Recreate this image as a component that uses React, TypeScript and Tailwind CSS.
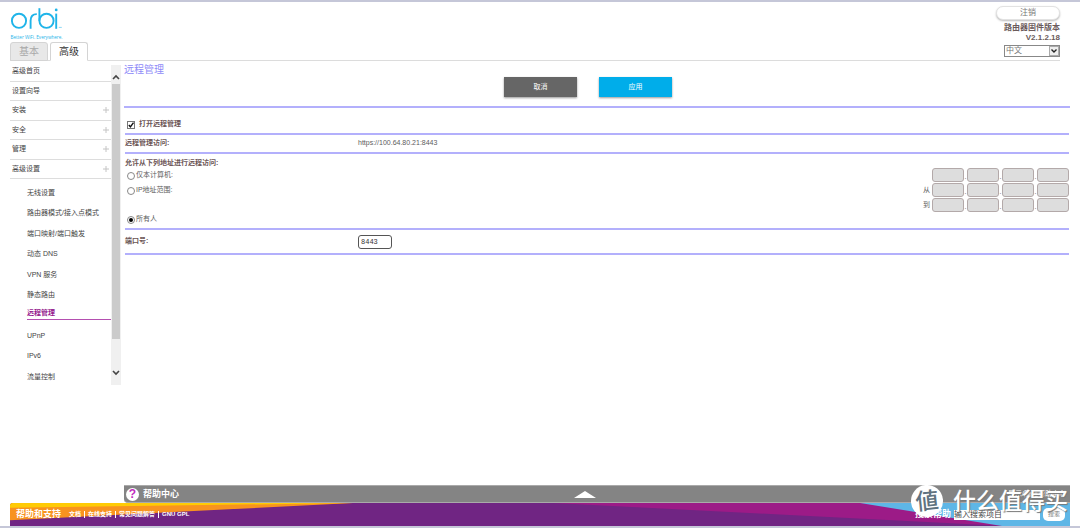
import { useState } from "react";
import type { ReactNode } from "react";

const sections = [
  { label: "高级首页", expandable: false },
  { label: "设置向导", expandable: false },
  { label: "安装", expandable: true },
  { label: "安全", expandable: true },
  { label: "管理", expandable: true },
  { label: "高级设置", expandable: true },
];

const subItems = [
  "无线设置",
  "路由器模式/接入点模式",
  "端口映射/端口触发",
  "动态 DNS",
  "VPN 服务",
  "静态路由",
  "远程管理",
  "UPnP",
  "IPv6",
  "流量控制",
];

const supportLinks = ["文档", "在线支持", "常见问题解答", "GNU GPL"];

function Logo() {
  return (
    <svg className="h-[34px] w-[58px]" viewBox="0 0 58 34" role="img" aria-label="orbi">
      <g fill="none" stroke="#1fb4e9" strokeWidth="1.9">
        <circle cx="9" cy="12.8" r="7.1" />
        <path d="M20.6 20.8V12.6C20.6 8.4 22.8 6 26.8 6.1" />
        <path d="M29.4 0.2V12.8" />
        <circle cx="36.5" cy="12.8" r="7.1" />
        <path d="M46.2 5.6V20.8" />
      </g>
      <circle cx="46.2" cy="1.9" r="1.4" fill="#1fb4e9" />
      <path d="M48.8 19.4h3" stroke="#8ed8f4" strokeWidth="1" />
      <text x="0.5" y="30.5" fontSize="4.6" fill="#1fb4e9" fontFamily="Open Sans, sans-serif">
        Better WiFi. Everywhere.
      </text>
    </svg>
  );
}

function Header() {
  return (
    <header className="mr-5 ml-2.5 flex h-[59px] items-end justify-between border-b border-[#dcdcdc]">
      <div className="flex flex-col">
        <Logo />
        <nav className="-mb-px flex gap-0.5">
          <button className="h-[19px] w-[38px] rounded-t-[3px] border border-[#d4d4d4] bg-[#e8e8e8] text-[10px] leading-4 text-[#a8a8a8]">
            基本
          </button>
          <button className="h-[19px] w-[38px] rounded-t-[3px] border border-[#d4d4d4] border-b-white bg-white text-[10px] leading-4 text-[#333]">
            高级
          </button>
        </nav>
      </div>
      <div className="flex flex-col items-end pb-[3px] text-[8px] leading-[10px] text-[#6b5b5b]">
        <button className="mb-[3px] h-[14px] w-[64px] rounded-full border border-[#e2e2e2] bg-white leading-3 text-[#777] shadow-[0_1px_2px_#bbb]">
          注销
        </button>
        <strong>路由器固件版本</strong>
        <strong>V2.1.2.18</strong>
        <span className="relative mt-0.5 block">
          <select
            aria-label="语言"
            className="block h-3 w-[56px] appearance-none border border-[#888] bg-white pl-px text-[8px] leading-[10px] text-[#777]"
          >
            <option>中文</option>
          </select>
          <span className="pointer-events-none absolute top-px right-px flex h-2.5 w-2.5 items-center justify-center border border-[#aaa] bg-[#eee]">
            <svg className="h-1.5 w-1.5" viewBox="0 0 6 6">
              <path d="M0.5 1.5L3 4L5.5 1.5" fill="none" stroke="#222" strokeWidth="1.4" />
            </svg>
          </span>
        </span>
      </div>
    </header>
  );
}

function Sidebar() {
  return (
    <aside className="flex h-[323px] shrink-0 text-[7px] text-[#444]">
      <nav className="w-[101px] overflow-hidden">
        <ul className="grid h-[117px] grid-rows-6">
          {sections.map((s) => (
            <li key={s.label} className="border-b border-[#ddd]">
              <a href="#" className="flex h-full items-center justify-between pr-0.5 pl-0.5">
                {s.label}
                {s.expandable && (
                  <svg className="h-1.5 w-1.5" viewBox="0 0 6 6">
                    <path d="M3 0V6M0 3H6" stroke="#c4c4c4" strokeWidth="1" />
                  </svg>
                )}
              </a>
            </li>
          ))}
        </ul>
        <ul className="mt-1 ml-[17px] grid h-[204px] grid-rows-10">
          {subItems.map((label) => (
            <li key={label} className="flex items-center whitespace-nowrap">
              {label === "远程管理" ? (
                <a
                  href="#"
                  aria-current="page"
                  className="mb-1 w-full border-b border-[#b44fb0] leading-3 font-bold text-[#951b8e]"
                >
                  {label}
                </a>
              ) : (
                <a href="#">{label}</a>
              )}
            </li>
          ))}
        </ul>
      </nav>
      <div className="mt-[3px] flex w-2.5 flex-col items-center bg-[#f0f0f0]">
        <svg className="h-[19px] w-2.5" viewBox="0 0 10 19">
          <path d="M2 14L5 11L8 14" fill="none" stroke="#444" strokeWidth="1.6" />
        </svg>
        <div className="h-[255px] w-2 bg-[#cbcbcb]" />
        <svg className="mt-auto h-6 w-2.5" viewBox="0 0 10 24">
          <path d="M2 10L5 13L8 10" fill="none" stroke="#444" strokeWidth="1.6" />
        </svg>
      </div>
    </aside>
  );
}

function AddressRow({ label, name }: { label?: string; name: string }) {
  return (
    <div className="flex h-[14px] items-center justify-end">
      {label && <span className="mr-0.5">{label}</span>}
      {[1, 2, 3, 4].map((n) => (
        <span key={n} className="flex items-end">
          <input
            disabled
            aria-label={`${name} ${n}`}
            className="h-[14px] w-8 rounded-[3px] border border-[#b3a9a9] bg-[#ddd]"
          />
          {n < 4 && <span className="w-[3px] text-center leading-[10px]">.</span>}
        </span>
      ))}
    </div>
  );
}

function RadioRow({
  label,
  checked,
  onSelect,
}: {
  label: string;
  checked: boolean;
  onSelect: () => void;
}) {
  return (
    <label className="flex h-[15px] items-center gap-px pl-0.5">
      <input
        type="radio"
        name="access"
        checked={checked}
        onChange={onSelect}
        className="h-2 w-2 appearance-none rounded-full border border-[#888] bg-white bg-clip-content p-px checked:bg-black"
      />
      {label}
    </label>
  );
}

function Row({ children, className }: { children: ReactNode; className: string }) {
  return (
    <div className={`mr-px ml-px flex border-b-2 border-[#b3b0fc] ${className}`}>{children}</div>
  );
}

function Content() {
  const [enabled, setEnabled] = useState(true);
  const [access, setAccess] = useState("all");
  const [port, setPort] = useState("8443");

  return (
    <main className="mr-2.5 ml-[3px] flex-1 text-[7px] text-[#5c5c5c]">
      <div className="h-[46px] border-b-2 border-[#b3b0fc]">
        <h1 className="h-[15px] pt-0.5 text-[10px] leading-3 text-[#8f8bf8]">远程管理</h1>
        <div className="flex justify-center gap-[22px] pr-[18px] text-white">
          <button className="h-5 w-[73px] bg-[#666] shadow-[0_1px_2px_#999]">取消</button>
          <button className="h-5 w-[73px] bg-[#00adea] shadow-[0_1px_2px_#999]">应用</button>
        </div>
      </div>
      <Row className="h-[27px] items-center pt-2">
        <label className="flex items-center gap-1 pl-0.5 font-bold text-[#6b5555]">
          <span className="relative flex">
            <input
              type="checkbox"
              checked={enabled}
              onChange={(e) => setEnabled(e.target.checked)}
              className="h-2 w-2 appearance-none border border-[#777] bg-white"
            />
            {enabled && (
              <svg className="pointer-events-none absolute inset-0 h-2 w-2" viewBox="0 0 8 8">
                <path d="M1.8 4L3.4 5.8L6.5 1.6" fill="none" stroke="#111" strokeWidth="1.4" />
              </svg>
            )}
          </span>
          打开远程管理
        </label>
      </Row>
      <Row className="h-[19px] items-center">
        <strong className="w-[233px] text-[#6b5555]">远程管理访问:</strong>
        <span>https://100.64.80.21:8443</span>
      </Row>
      <Row className="h-[76px] flex-col pt-1">
        <strong className="leading-[10px] text-[#6b5555]">允许从下列地址进行远程访问:</strong>
        <div className="flex justify-between">
          <div>
            <RadioRow label="仅本计算机:" checked={access === "one"} onSelect={() => setAccess("one")} />
            <RadioRow label="IP地址范围:" checked={access === "range"} onSelect={() => setAccess("range")} />
            <div className="h-[14px]" />
            <RadioRow label="所有人" checked={access === "all"} onSelect={() => setAccess("all")} />
          </div>
          <div className="flex flex-col gap-px">
            <AddressRow name="计算机地址" />
            <AddressRow label="从" name="起始地址" />
            <AddressRow label="到" name="结束地址" />
          </div>
        </div>
      </Row>
      <Row className="h-[25px] items-center">
        <label htmlFor="port" className="w-[233px] font-bold text-[#6b5555]">
          端口号:
        </label>
        <input
          id="port"
          value={port}
          onChange={(e) => setPort(e.target.value)}
          className="h-[14px] w-[34px] rounded-[3px] border border-[#555] px-0.5 font-['Liberation_Mono',monospace] text-[7px] text-[#333]"
        />
      </Row>
    </main>
  );
}

function HelpBar() {
  return (
    <div className="mr-2.5 ml-[124px] grid h-[18px] grid-cols-[20fr_auto_21fr] items-center rounded-bl-[4px] border-y border-[#aaa] bg-[#848484] pr-1 pl-0.5 text-white">
      <div className="flex items-center gap-1">
        <span className="flex h-[13px] w-[13px] items-center justify-center rounded-full bg-white text-[12px] leading-3 font-bold text-[#c12bc0]">
          ?
        </span>
        <strong className="text-[9px] leading-3">帮助中心</strong>
      </div>
      <svg className="h-[7px] w-[22px]" viewBox="0 0 22 7">
        <path d="M0 7L11 0L22 7Z" fill="#fff" />
      </svg>
      <a href="#" className="text-right text-[7px] leading-3">
        显示/隐藏帮助中心
      </a>
    </div>
  );
}

function Footer() {
  return (
    <footer className="relative mr-2.5 ml-2.5 h-[23px] overflow-hidden rounded-tl-[3px]">
      <svg
        className="absolute inset-0 h-full w-full"
        viewBox="0 0 1060 24"
        preserveAspectRatio="none"
        aria-hidden="true"
      >
        <rect width="1060" height="24" fill="#702583" />
        <path d="M0 0H343L0 18Z" fill="#f8931f" />
        <path d="M0 0H343L0 5Z" fill="#ffcb05" />
        <path d="M543 0H1060V24H995L770 12Z" fill="#9c1b87" />
        <path d="M850 0H1060V24H992Z" fill="#5eb6e6" />
      </svg>
      <div className="relative flex h-full items-center justify-between pr-[5px] pl-1.5 text-white">
        <div className="flex items-center gap-2">
          <strong className="text-[9px]">帮助和支持</strong>
          <ul className="flex items-center text-[6px] leading-[7px] font-bold">
            {supportLinks.map((l, i) => (
              <li key={l} className={i > 0 ? "ml-[3px] border-l border-white pl-[3px]" : ""}>
                <a href="#">{l}</a>
              </li>
            ))}
          </ul>
        </div>
        <form className="flex items-center" onSubmit={(e) => e.preventDefault()}>
          <label htmlFor="search" className="mr-[3px] text-[9px] font-bold">
            搜索帮助
          </label>
          <input
            id="search"
            defaultValue="输入搜索项目"
            className="mr-[3px] h-2.5 w-[86px] bg-white text-[8px] leading-[10px] text-[#444]"
          />
          <button className="h-[13px] w-[22px] rounded-[5px] bg-white text-[6px] text-[#777]">
            搜索
          </button>
        </form>
      </div>
    </footer>
  );
}

function Watermark() {
  return (
    <div className="pointer-events-none absolute right-3 bottom-[9px] flex items-center gap-2.5">
      <span className="flex h-8 w-8 -rotate-6 items-center justify-center rounded-full bg-white text-[23px] leading-8 font-medium text-[#5f7280]">
        値
      </span>
      <span className="text-[23px] leading-8 font-medium text-white [text-shadow:1px_1px_1px_#777]">
        什么值得买
      </span>
    </div>
  );
}

export default function App() {
  return (
    <div className="relative flex min-h-screen flex-col border-y-2 border-[#c5c7d8] bg-white font-['Liberation_Sans','Noto_Sans_CJK_SC',sans-serif]">
      <Header />
      <div className="flex flex-1 pt-px pl-2.5">
        <Sidebar />
        <Content />
      </div>
      <HelpBar />
      <Footer />
      <Watermark />
    </div>
  );
}
